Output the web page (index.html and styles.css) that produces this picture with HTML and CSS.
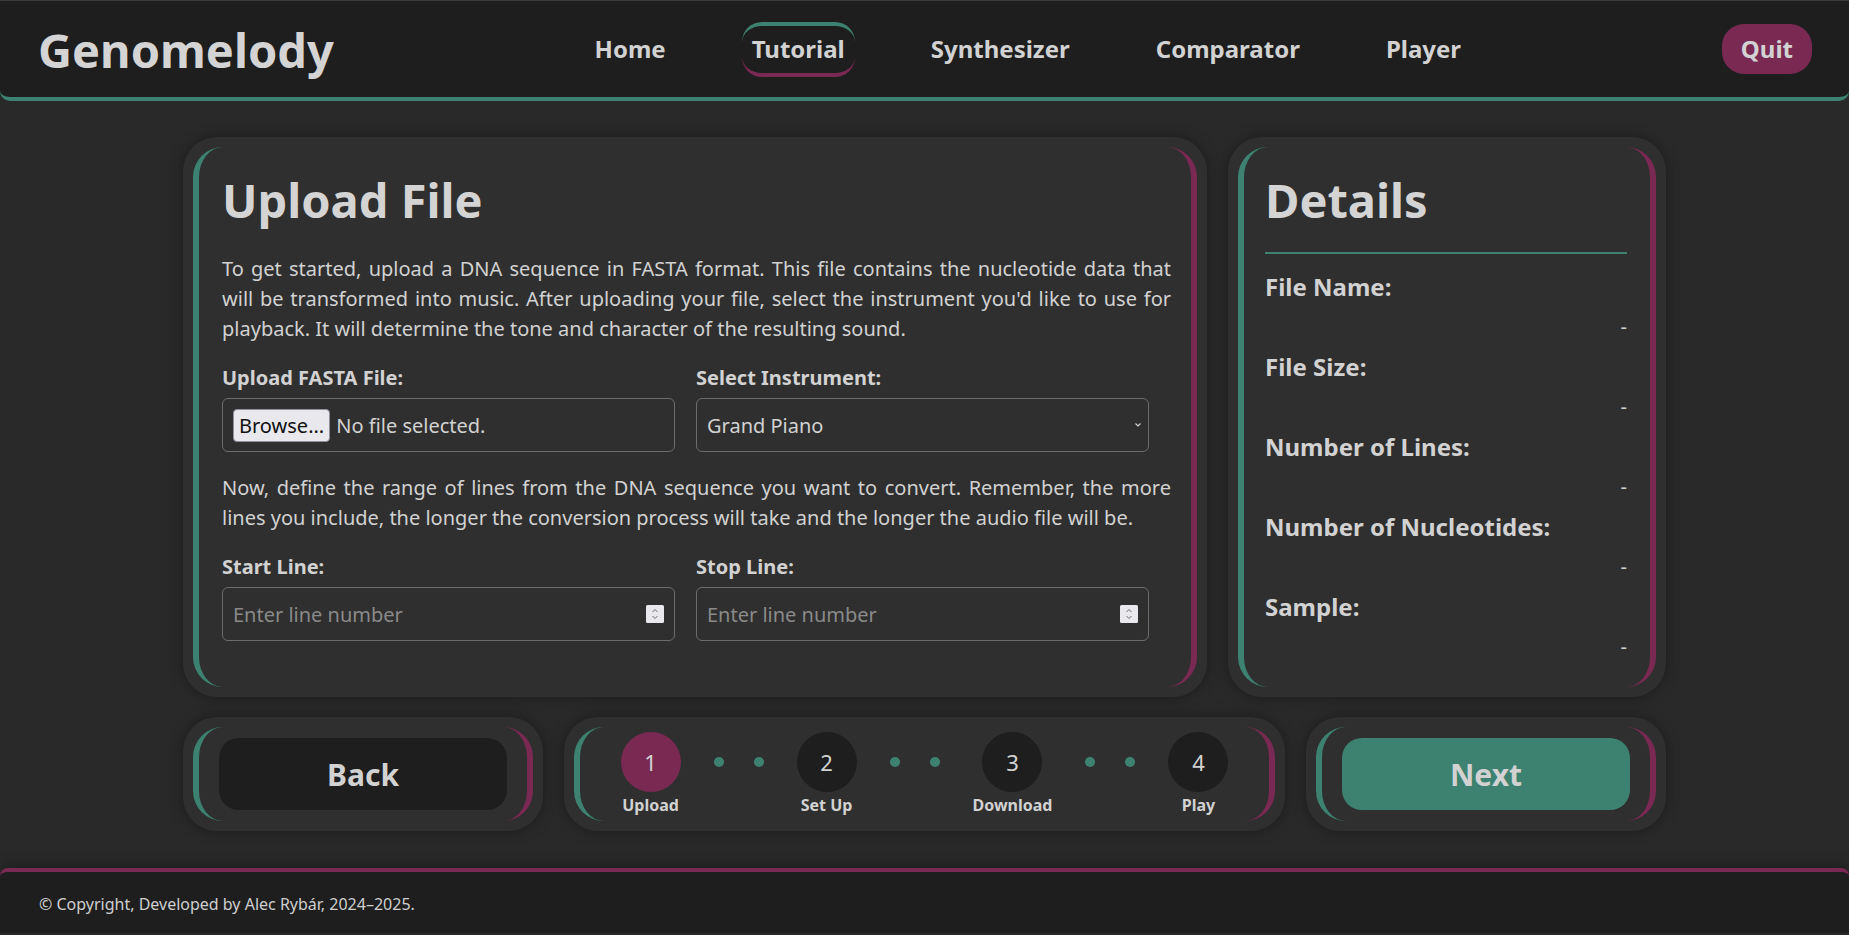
FILE: index.html
```html
<!DOCTYPE html>
<html lang="en">
<head>
<meta charset="utf-8">
<title>Genomelody</title>
<link rel="stylesheet" href="styles.css">
</head>
<body>
<header class="header">
  <div class="logo">Genomelody</div>
  <nav class="nav">
    <a class="nav-link" href="#">Home</a>
    <a class="nav-link active" href="#">Tutorial</a>
    <a class="nav-link" href="#">Synthesizer</a>
    <a class="nav-link" href="#">Comparator</a>
    <a class="nav-link" href="#">Player</a>
  </nav>
  <button class="quit">Quit</button>
</header>

<main class="main">
  <div class="row">
    <section class="card card-upload">
      <div class="panel panel-upload">
        <h1 class="title">Upload File</h1>
        <p class="text">To get started, upload a DNA sequence in FASTA format. This file contains the nucleotide data that will be transformed into music. After uploading your file, select the instrument you'd like to use for playback. It will determine the tone and character of the resulting sound.</p>
        <div class="fields">
          <div class="field">
            <label class="label">Upload FASTA File:</label>
            <div class="control">
              <button class="browse">Browse...</button>
              <span class="file-text">No file selected.</span>
            </div>
          </div>
          <div class="field">
            <label class="label">Select Instrument:</label>
            <div class="control control-select">
              <select class="select">
                <option>Grand Piano</option>
              </select>
              <svg class="chevron" width="8" height="6" viewBox="0 0 8 6"><path d="M1.5 1.5 L4 4 L6.5 1.5" fill="none" stroke="#cfcfcf" stroke-width="1.2"/></svg>
            </div>
          </div>
        </div>
        <p class="text">Now, define the range of lines from the DNA sequence you want to convert. Remember, the more lines you include, the longer the conversion process will take and the longer the audio file will be.</p>
        <div class="fields fields-last">
          <div class="field">
            <label class="label">Start Line:</label>
            <div class="control control-num">
              <input class="num" type="text" placeholder="Enter line number">
              <svg class="spinner" width="18" height="18" viewBox="0 0 18 18"><rect x="0" y="0" width="18" height="18" rx="1.5" fill="#e9e9ed"/><path d="M6.5 7 L9 4.5 L11.5 7" fill="none" stroke="#6a6a70" stroke-width="1"/><path d="M6.5 11 L9 13.5 L11.5 11" fill="none" stroke="#6a6a70" stroke-width="1"/></svg>
            </div>
          </div>
          <div class="field">
            <label class="label">Stop Line:</label>
            <div class="control control-num">
              <input class="num" type="text" placeholder="Enter line number">
              <svg class="spinner" width="18" height="18" viewBox="0 0 18 18"><rect x="0" y="0" width="18" height="18" rx="1.5" fill="#e9e9ed"/><path d="M6.5 7 L9 4.5 L11.5 7" fill="none" stroke="#6a6a70" stroke-width="1"/><path d="M6.5 11 L9 13.5 L11.5 11" fill="none" stroke="#6a6a70" stroke-width="1"/></svg>
            </div>
          </div>
        </div>
      </div>
    </section>

    <section class="card card-details">
      <div class="panel panel-details">
        <h1 class="title title-details">Details</h1>
        <hr class="rule">
        <div class="details">
          <div class="detail"><div class="detail-label">File Name:</div><div class="detail-value">-</div></div>
          <div class="detail"><div class="detail-label">File Size:</div><div class="detail-value">-</div></div>
          <div class="detail"><div class="detail-label">Number of Lines:</div><div class="detail-value">-</div></div>
          <div class="detail"><div class="detail-label">Number of Nucleotides:</div><div class="detail-value">-</div></div>
          <div class="detail"><div class="detail-label">Sample:</div><div class="detail-value">-</div></div>
        </div>
      </div>
    </section>
  </div>

  <div class="row row-bottom">
    <section class="card card-side">
      <div class="panel panel-btn">
        <button class="big-btn btn-back">Back</button>
      </div>
    </section>
    <section class="card card-steps">
      <div class="panel panel-steps">
        <div class="steps">
          <div class="step"><div class="circle active">1</div><div class="step-label">Upload</div></div>
          <div class="connector"><span class="dot"></span><span class="dot"></span></div>
          <div class="step"><div class="circle">2</div><div class="step-label">Set Up</div></div>
          <div class="connector"><span class="dot"></span><span class="dot"></span></div>
          <div class="step"><div class="circle">3</div><div class="step-label">Download</div></div>
          <div class="connector"><span class="dot"></span><span class="dot"></span></div>
          <div class="step"><div class="circle">4</div><div class="step-label">Play</div></div>
        </div>
      </div>
    </section>
    <section class="card card-side">
      <div class="panel panel-btn">
        <button class="big-btn btn-next">Next</button>
      </div>
    </section>
  </div>
</main>

<footer class="footer">© Copyright, Developed by Alec Rybár, 2024–2025.</footer>
</body>
</html>
```

FILE: styles.css
```css
* { box-sizing: border-box; }

body {
  margin: 0;
  background: #292929;
  font-family: "Noto Sans", "Open Sans", sans-serif;
  color: #d2d2d2;
}

/* Header */
.header {
  display: flex;
  justify-content: space-between;
  align-items: center;
  height: 101px;
  padding: 0 37px 0 38px;
  background: #1e1e1e;
  border-top: 1px solid #3a3a3a;
  border-bottom: 4px solid #3d8270;
  border-radius: 0 0 10px 10px;
}

.logo {
  font-size: 47px;
  font-weight: 700;
  line-height: 1;
  color: #d4d4d4;
  padding-top: 2px;
}

.nav {
  display: flex;
  align-items: center;
  gap: 66px;
}

.nav-link {
  font-size: 24px;
  font-weight: 700;
  line-height: 32px;
  color: #d2d2d2;
  text-decoration: none;
  padding: 7px 10px 8px;
  border-top: 4px solid transparent;
  border-bottom: 4px solid transparent;
  border-radius: 20px;
}

.nav-link.active {
  border-top-color: #3d8270;
  border-bottom-color: #7a2953;
}

.quit {
  font-family: inherit;
  font-size: 24px;
  font-weight: 700;
  line-height: 34px;
  color: #d2d2d2;
  background: #7a2953;
  border: none;
  border-radius: 22px;
  padding: 8px 19px;
}

/* Main */
.main {
  width: 1483px;
  margin: 36px auto 0;
  display: flex;
  flex-direction: column;
  gap: 20px;
}

.row {
  display: flex;
  gap: 21px;
}

.card {
  display: flex;
  background: #2f2f2f;
  border-radius: 34px;
  padding: 10px;
  box-shadow: 0 0 14px rgba(0, 0, 0, 0.35);
}

.panel {
  flex: 1;
  min-width: 0;
  border-left: 6px solid #3d8270;
  border-right: 6px solid #7a2953;
  border-radius: 30px;
}

.card-upload { flex: 0 0 1024px; }
.card-details { flex: 0 0 438px; }

.panel-upload { padding: 25px 20px 22px 23px; }
.panel-details { padding: 25px 23px 25px 21px; }

.title {
  font-size: 47px;
  font-weight: 700;
  line-height: 57px;
  color: #d4d4d4;
  margin: 0 0 25px;
}

.title-details { margin-bottom: 23px; }

.text {
  font-size: 20px;
  line-height: 30px;
  text-align: justify;
  margin: 0 0 19px;
}

.fields {
  display: grid;
  grid-template-columns: 453px 453px;
  column-gap: 21px;
  margin-bottom: 21px;
}

.fields-last { margin-bottom: 0; }

.label {
  display: block;
  font-size: 20px;
  font-weight: 700;
  line-height: 30px;
  margin-bottom: 5px;
}

.control {
  display: flex;
  align-items: center;
  height: 54px;
  border: 1px solid #6c6c6c;
  border-radius: 6px;
  padding: 0 10px;
}

.control-select { padding-right: 6px; }

.browse {
  font-family: inherit;
  font-size: 20px;
  line-height: 31px;
  height: 33px;
  color: #111;
  background: #e9e9ed;
  border: 1px solid #8f8f9d;
  border-radius: 4px;
  padding: 0 5px;
}

.file-text {
  margin-left: 6px;
  font-size: 20px;
}

.select {
  flex: 1;
  appearance: none;
  -webkit-appearance: none;
  background: transparent;
  border: none;
  outline: none;
  color: #d2d2d2;
  font-family: inherit;
  font-size: 20px;
  padding: 0;
}

.num {
  flex: 1;
  min-width: 0;
  background: transparent;
  border: none;
  outline: none;
  color: #d2d2d2;
  font-family: inherit;
  font-size: 20px;
  padding: 0;
}

.num::placeholder { color: #8a8a8a; }

.rule {
  border: none;
  height: 2px;
  background: #3d8270;
  margin: 0 0 18px;
}

.details {
  display: flex;
  flex-direction: column;
  gap: 10px;
}

.detail-label {
  font-size: 24px;
  font-weight: 700;
  line-height: 30px;
}

.detail-value {
  font-size: 20px;
  line-height: 30px;
  margin-top: 10px;
  text-align: right;
}

/* Bottom row */
.card-side { flex: 0 0 360px; }
.card-steps { flex: 0 0 721px; }

.panel-btn { padding: 11px 20px; }

.big-btn {
  display: block;
  width: 100%;
  height: 72px;
  border: none;
  border-radius: 20px;
  font-family: inherit;
  font-size: 30px;
  font-weight: 700;
  color: #d2d2d2;
}

.btn-back { background: #1e1e1e; }
.btn-next { background: #3d8270; }

.panel-steps {
  display: flex;
  justify-content: center;
  align-items: center;
}

.steps {
  display: flex;
  align-items: flex-start;
  gap: 33px;
}

.step {
  display: flex;
  flex-direction: column;
  align-items: center;
  gap: 2px;
}

.circle {
  width: 60px;
  height: 60px;
  border-radius: 50%;
  background: #1e1e1e;
  display: flex;
  align-items: center;
  justify-content: center;
  font-size: 22px;
  color: #d2d2d2;
}

.circle.active { background: #7a2953; }

.step-label {
  font-size: 16px;
  font-weight: 700;
  line-height: 22px;
}

.connector {
  display: flex;
  align-items: center;
  gap: 30px;
  height: 60px;
}

.dot {
  width: 10px;
  height: 10px;
  border-radius: 50%;
  background: #3d8270;
}

/* Footer */
.footer {
  margin-top: 37px;
  background: #1e1e1e;
  border-top: 4px solid #7a2953;
  border-radius: 8px 8px 0 0;
  padding: 21px 39px 18px;
  font-size: 16px;
  line-height: 22px;
  color: #cfcfcf;
  box-shadow: 0 -4px 14px rgba(0, 0, 0, 0.25);
}
```
